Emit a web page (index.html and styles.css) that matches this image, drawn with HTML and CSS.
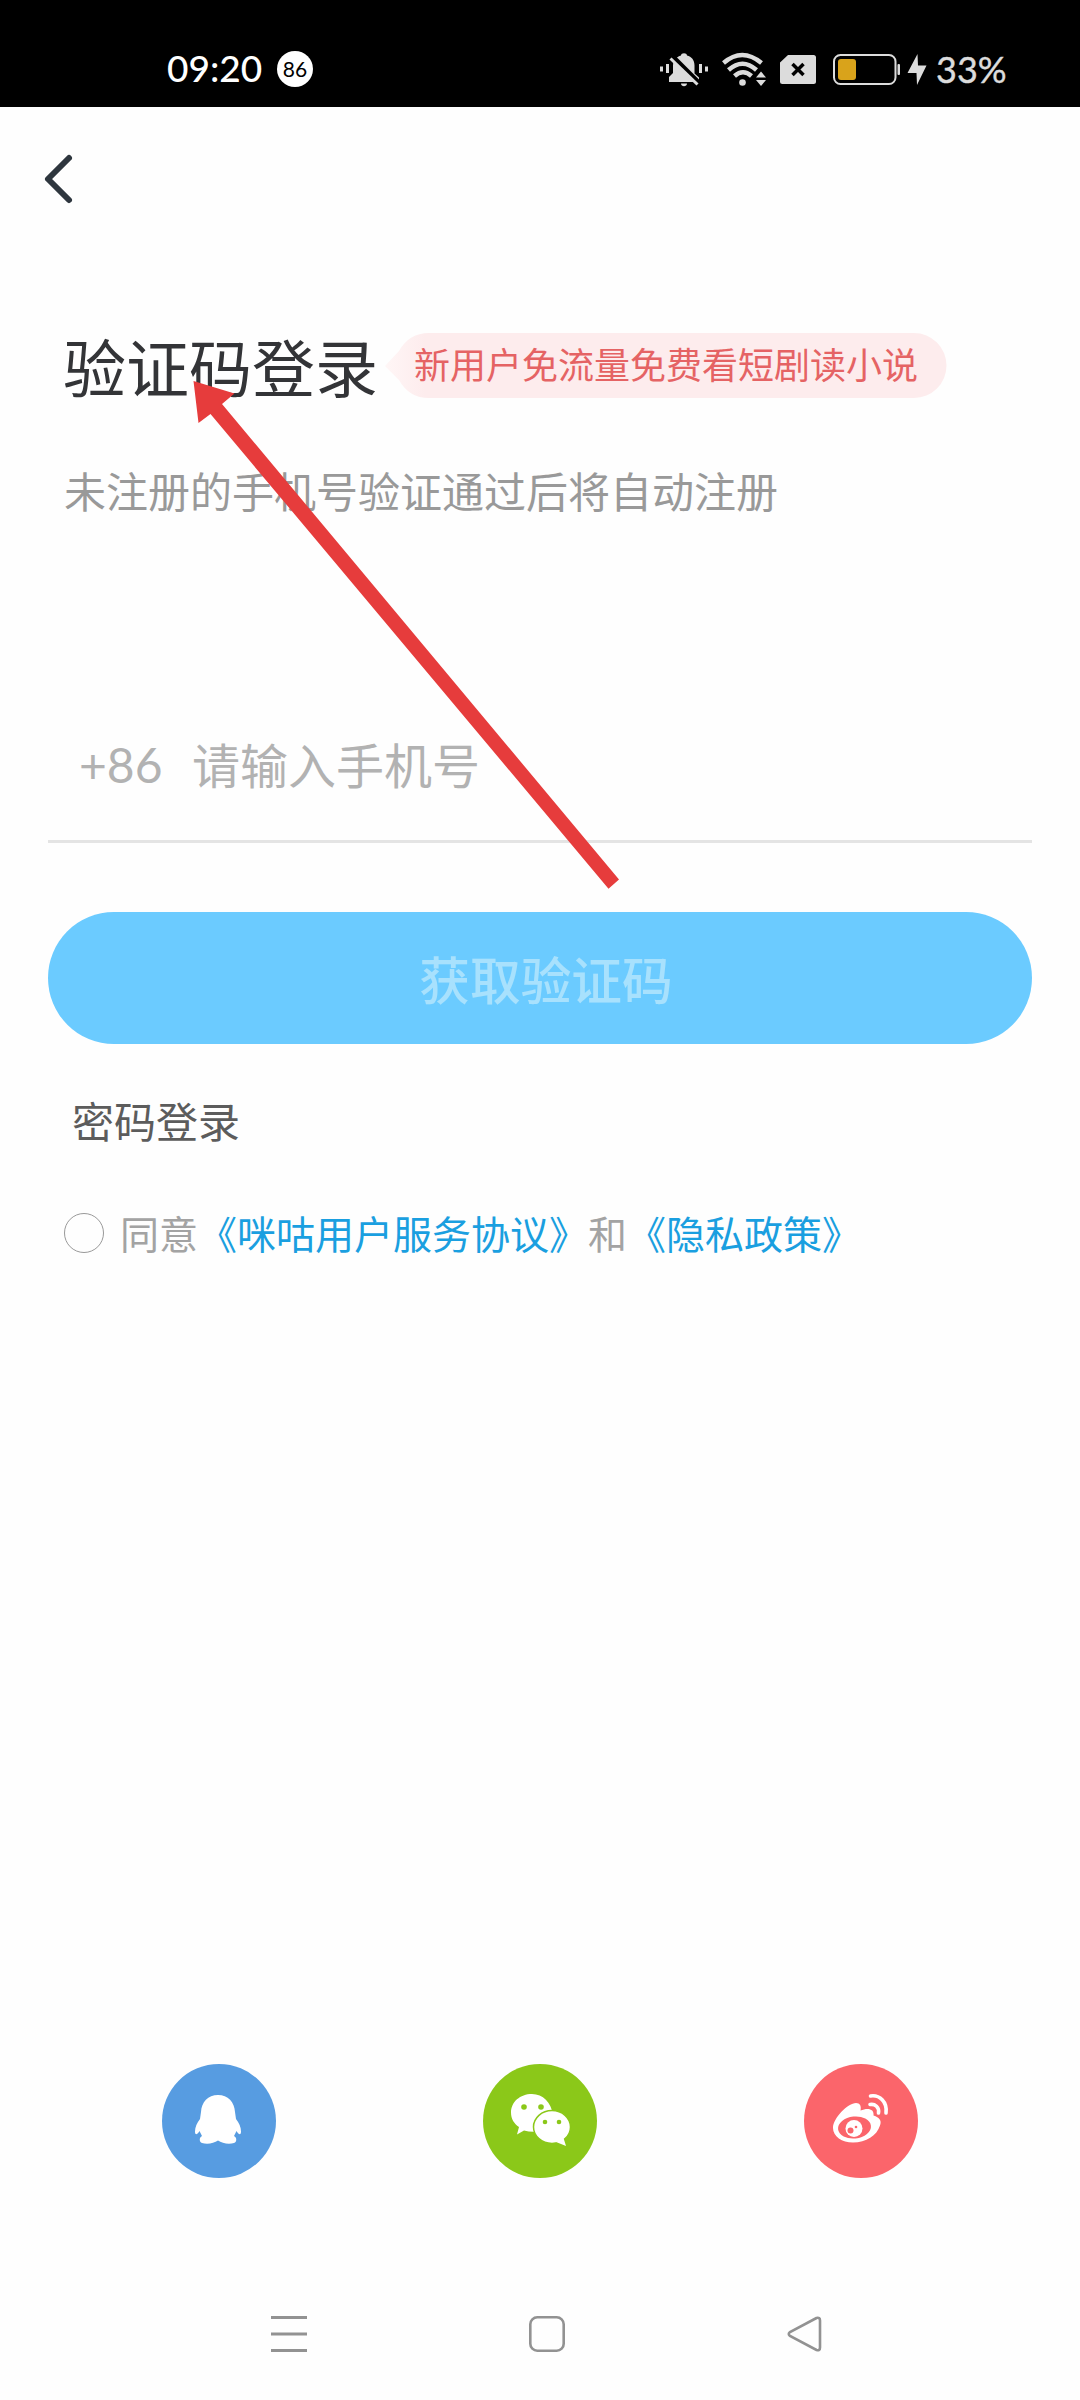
FILE: index.html
```html
<!DOCTYPE html>
<html lang="zh-CN">
<head>
<meta charset="utf-8">
<title>验证码登录</title>
<link rel="stylesheet" href="styles.css">
</head>
<body>
<div class="screen">
  <header class="status">
    <span class="clock">09:20</span>
    <span class="count">86</span>
    <svg class="status-icons" width="270" height="40" viewBox="658 48 270 40" fill="#dcdcdc">
      <path d="M660 65.500h3v5h-3zM666 63h3v9h-3zM699 63h3v9h-3zM705 65.500h3v5h-3z"/>
      <path d="M669 81v-5l4-4v-7c0-6 4-9.500 8-10.500 0-3 6-3 6 0 4.500 1 7.500 4.500 7.500 10v8l4.500 4v4.500zM681 82.500h6c0 3.500-6 3.500-6 0z"/>
      <path d="M672.500 55.500l27 27" fill="none" stroke="#000" stroke-width="5"/>
      <path d="M670.500 57.500l27 26" fill="none" stroke="#dcdcdc" stroke-width="3"/>
      <g fill="none" stroke="#dcdcdc" stroke-width="4.500">
        <path d="M723.500 62q18.500-16 38 0M728.500 69q14-12.500 28 0M734.500 75q8.500-7.500 17 0"/>
      </g>
      <circle cx="742.500" cy="81.500" r="3.300"/>
      <path d="M756 76.500l5-6 5 6zM756 79h10l-5 6z"/>
      <path d="M788 54h25.500q2.500 0 2.500 2.500v24q0 2.500-2.500 2.500h-31q-2.500 0-2.500-2.500v-19z"/>
      <path d="M792.500 63l11 11M803.500 63l-11 11" stroke="#000" stroke-width="3.500"/>
      <rect x="834" y="54" width="61.500" height="29" rx="6.500" fill="none" stroke="#dcdcdc" stroke-width="2"/>
      <rect x="838" y="58" width="18" height="21" rx="3" fill="#d9a31b"/>
      <rect x="897.500" y="63" width="2.500" height="11" rx="1"/>
      <path d="M917.500 53l-10 19h9l.5 12 9.500-19.500h-8.500z"/>
    </svg>
    <span class="percent">33%</span>
  </header>

  <nav class="topbar">
    <svg class="back" width="32" height="54" viewBox="0 0 32 54"><path d="M26 6L5 27l21 21" fill="none" stroke="#2e363e" stroke-width="6" stroke-linecap="round" stroke-linejoin="round"/></svg>
  </nav>

  <main class="login">
    <div class="heading">
      <h1>验证码登录</h1>
      <div class="badge">新用户免流量免费看短剧读小说</div>
    </div>
    <p class="hint">未注册的手机号验证通过后将自动注册</p>
    <div class="phone"><span class="code">+86</span><span>请输入手机号</span></div>
    <div class="submit">获取验证码</div>
    <div class="alt">密码登录</div>
    <div class="agree"><span class="radio"></span><span>同意<a>《咪咕用户服务协议》</a>和<a>《隐私政策》</a></span></div>
  </main>

  <div class="social">
    <svg width="114" height="114" viewBox="0 0 114 114">
      <circle cx="57" cy="57" r="57" fill="#579ce1"/>
      <path fill="#fff" d="M56 31c-10 0-16.500 7-17 17l-1 7c-3 4-5 8-5 12.500 0 4 2 3.500 4.500-.5l2.500 5c-3 1.500-3 6 0 7 5 1.500 12 .5 16-2.500 4 3 11 4 16 2.500 3-1 3-5.500 0-7l2.500-5c2.500 4 4.500 4.500 4.500.5 0-4.500-2-8.500-5-12.500l-1-7c-.5-10-7-17-17-17z"/>
    </svg>
    <svg width="114" height="114" viewBox="0 0 114 114">
      <circle cx="57" cy="57" r="57" fill="#8bc819"/>
      <path fill="#fff" d="M49 30c-12 0-21 8-21 18.500 0 6.500 3 11 8 14.500l-2 7.500 7-4q7 2 14 1l15-17c-2-12-10-20.500-21-20.500z"/>
      <ellipse cx="69" cy="63" rx="18.500" ry="16.500" fill="#fff" stroke="#8bc819" stroke-width="1.500"/>
      <path fill="#fff" d="M73 78l10 4-2.500-8z"/>
      <g fill="#8bc819"><circle cx="41" cy="43" r="2.800"/><circle cx="58" cy="43" r="2.800"/><circle cx="62" cy="58" r="2.300"/><circle cx="76" cy="58" r="2.300"/></g>
    </svg>
    <svg width="114" height="114" viewBox="0 0 114 114">
      <circle cx="57" cy="57" r="57" fill="#fb656b"/>
      <path fill="#fff" d="M29 64c0-10 15-25 23-25 4 0 5.500 3 4.500 7.500 7-3 14-2 13 5 6 2 8.500 5 6.500 10-3 10-14 17-27 17-11 0-20-6-20-14.500z"/>
      <ellipse cx="50.500" cy="63.500" rx="16.500" ry="11" transform="rotate(-6 50.500 63.500)" fill="#fb656b"/>
      <circle cx="50" cy="64.500" r="8.500" fill="#fff"/>
      <circle cx="46.500" cy="66.500" r="3" fill="#fb656b"/><circle cx="52" cy="63" r="1.300" fill="#fb656b"/>
      <path fill="none" stroke="#fff" stroke-width="3.600" stroke-linecap="round" d="M66.500 32c9-1.500 17 6 15.500 17M66 40.500c5-1 9.500 3 8.500 8.500"/>
    </svg>
  </div>

  <footer class="navbar">
    <svg width="36" height="38" viewBox="0 0 36 38"><path d="M0 2.500h36M0 19h36M0 35.500h36" stroke="#929292" stroke-width="3"/></svg>
    <svg width="36" height="38" viewBox="0 0 36 38"><rect x="1.300" y="2.300" width="33.400" height="33.400" rx="7" fill="none" stroke="#929292" stroke-width="2.600"/></svg>
    <svg width="36" height="38" viewBox="0 0 36 38"><path d="M29.500 3L3 17q-2.500 2 0 4l26.500 14q3.500 1 3.500-2.500V5.500Q33 2 29.500 3z" fill="none" stroke="#929292" stroke-width="2.600"/></svg>
  </footer>

  <svg class="pointer" width="430" height="510" viewBox="192 380 430 510"><path fill="#e63c3c" d="M193.500 381l41 12.500-12.500 10.500 397 475.500-10.500 9.200-398-474.700-12 9z"/></svg>
</div>
</body>
</html>
```
FILE: styles.css
```css
body {
  margin: 0;
  background: #fefefe;
  font-family: "Noto Sans CJK SC", sans-serif;
}

.screen {
  position: relative;
  display: flex;
  flex-direction: column;
  box-sizing: border-box;
  width: 1080px;
  height: 2400px;
  overflow: hidden;
}

.status {
  display: flex;
  align-items: center;
  box-sizing: border-box;
  height: 107px;
  padding: 30px 0 0 167px;
  background: #000;
  color: #fff;
  font-family: Lato, sans-serif;
}

.clock {
  width: 110px;
  padding-bottom: 2px;
  font-size: 37px;
  font-weight: 500;
}

.count {
  width: 36px;
  height: 36px;
  border-radius: 50%;
  background: #fff;
  color: #000;
  font-size: 21px;
  line-height: 36px;
  text-align: center;
}

.status-icons {
  margin-left: 345px;
}

.percent {
  margin-left: 8px;
  padding-top: 1px;
  color: #dcdcdc;
  font-size: 36px;
  -webkit-text-stroke: 0.4px #dcdcdc;
}

.topbar {
  display: flex;
  align-items: center;
  height: 144px;
  padding-left: 43px;
}

.login {
  display: flex;
  flex-direction: column;
}

.heading {
  display: flex;
  align-items: center;
  height: 66px;
  margin-top: 81px;
  padding-left: 63px;
}

h1 {
  width: 322px;
  margin: 0;
  color: #333437;
  font-size: 63px;
  font-weight: 400;
  line-height: 64px;
  white-space: nowrap;
}

.badge {
  box-sizing: border-box;
  width: 562px;
  height: 66px;
  padding-left: 29px;
  background: linear-gradient(90deg, #fff6f6, #fdeced 40px);
  clip-path: path("M0 34L14 19Q24 1 44 1H529A32.500 32.500 0 0 1 529 66H44Q24 66 14 48Z");
  color: #e56364;
  font-size: 36px;
  line-height: 62px;
  white-space: nowrap;
}

.hint {
  height: 60px;
  margin: 62px 0 0 64px;
  color: #999;
  font-size: 42px;
  line-height: 60px;
}

.phone {
  display: flex;
  box-sizing: border-box;
  height: 147px;
  margin: 176px 48px 0;
  padding: 33px 0 0 31px;
  border-bottom: 3px solid #e4e4e4;
  color: #b2b2b2;
  font-size: 48px;
  line-height: 68px;
}

.code {
  width: 113px;
  padding-top: 2px;
  font-family: Lato, sans-serif;
}

.submit {
  height: 132px;
  margin: 69px 48px 0;
  padding-left: 12px;
  border-radius: 66px;
  background: #6bcbff;
  color: #a8e1fd;
  font-size: 50.700px;
  font-weight: 500;
  line-height: 132px;
  text-align: center;
}

.alt {
  height: 60px;
  margin: 46px 0 0 72px;
  color: #5c5c5c;
  font-size: 42px;
  line-height: 60px;
}

.agree {
  display: flex;
  align-items: center;
  gap: 16px;
  height: 60px;
  margin: 52px 0 0 64px;
  color: #a3a3a3;
  font-size: 39px;
  line-height: 60px;
}

.radio {
  box-sizing: border-box;
  width: 40px;
  height: 40px;
  margin-top: 2px;
  border: 1px solid #999;
  border-radius: 50%;
}

.agree a {
  color: #1a9fe0;
}

.social {
  display: flex;
  justify-content: space-between;
  margin: auto 162px 0;
}

.navbar {
  display: flex;
  justify-content: space-between;
  margin: 137px 257px 47px 271px;
}

.pointer {
  position: absolute;
  left: 192px;
  top: 380px;
}
```
